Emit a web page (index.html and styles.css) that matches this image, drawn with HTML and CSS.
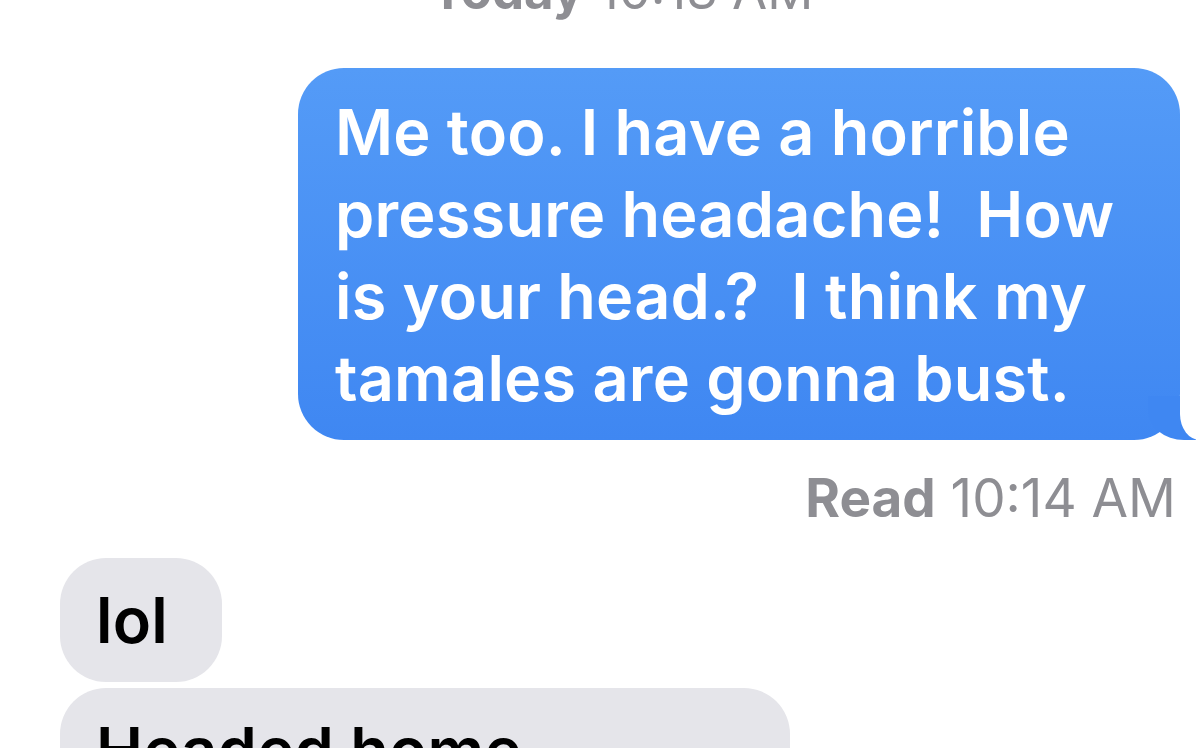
FILE: index.html
```
<!DOCTYPE html>
<html lang="en">
<head>
    <meta charset="UTF-8">
    <meta name="viewport" content="width=device-width, initial-scale=1.0">
    <title>Messages</title>
    <link rel="stylesheet" href="styles.css">
</head>
<body>

    <div class="thread">
        <!-- Day divider -->
        <div class="stamp"><b>Today</b> 10:13 AM</div>

        <!-- Sent message -->
        <div class="row out">
            <div class="bubble sent">Me too. I have a horrible pressure headache!&nbsp; How is your head.?&nbsp; I think my tamales are gonna bust.</div>
        </div>
        <div class="receipt"><b>Read</b> 10:14 AM</div>

        <!-- Received messages -->
        <div class="row in">
            <div class="bubble got">lol</div>
        </div>
        <div class="row in">
            <div class="bubble got wide">Headed home</div>
        </div>
    </div>

</body>
</html>
```

FILE: styles.css
```
  body {
      margin: 0;
      overflow: hidden; /* no scrollbars */
      background-color: #fff;
      height: 100vh;
      font-family: "Inter", "Liberation Sans", sans-serif;
  }

  .thread {
      display: flex;
      flex-direction: column;
  }

  .stamp {
      margin-top: -39px;
      padding-left: 44px;
      text-align: center;
      font-size: 51px;
      line-height: 60px;
      color: #8e8e93;
  }

  .stamp b,
  .receipt b {
      font-weight: 700;
  }

  .row {
      display: flex;
  }

  .row.out {
      justify-content: flex-end;
      margin-top: 47px;
      padding-right: 20px;
  }

  .row.in {
      justify-content: flex-start;
      padding-left: 60px;
  }

  .bubble {
      position: relative;
      box-sizing: border-box;
      padding: 21px 54px 21px 36px;
      border-radius: 46px;
      font-size: 63px;
      font-weight: 600;
      line-height: 82px;
      letter-spacing: 0.2px;
  }

  /* Blue outgoing bubble, slight top-to-bottom gradient */
  .bubble.sent {
      width: 882px;
      padding: 23px 30px 21px 37px;
      color: #fff;
      background: linear-gradient(to bottom, #549bf7, #3f87f2);
  }

  /* Tail on the bottom right corner */
  .bubble.sent::before {
      content: "";
      position: absolute;
      right: -16px;
      bottom: 0;
      width: 48px;
      height: 44px;
      background: #3f87f2;
      border-bottom-left-radius: 36px 30px;
  }

  .bubble.sent::after {
      content: "";
      position: absolute;
      right: -20px;
      bottom: 0;
      width: 20px;
      height: 46px;
      background: #fff;
      border-bottom-left-radius: 20px 26px;
  }

  .receipt {
      margin-top: 28px;
      padding-right: 24px;
      text-align: right;
      font-size: 53px;
      line-height: 60px;
      color: #8e8e93;
  }

  .bubble.got {
      color: #000;
      background: #e5e5ea;
  }

  .receipt + .row.in {
      margin-top: 30px;
  }

  .row.in + .row.in {
      margin-top: 6px;
  }

  .bubble.wide {
      width: 730px;
  }
```
